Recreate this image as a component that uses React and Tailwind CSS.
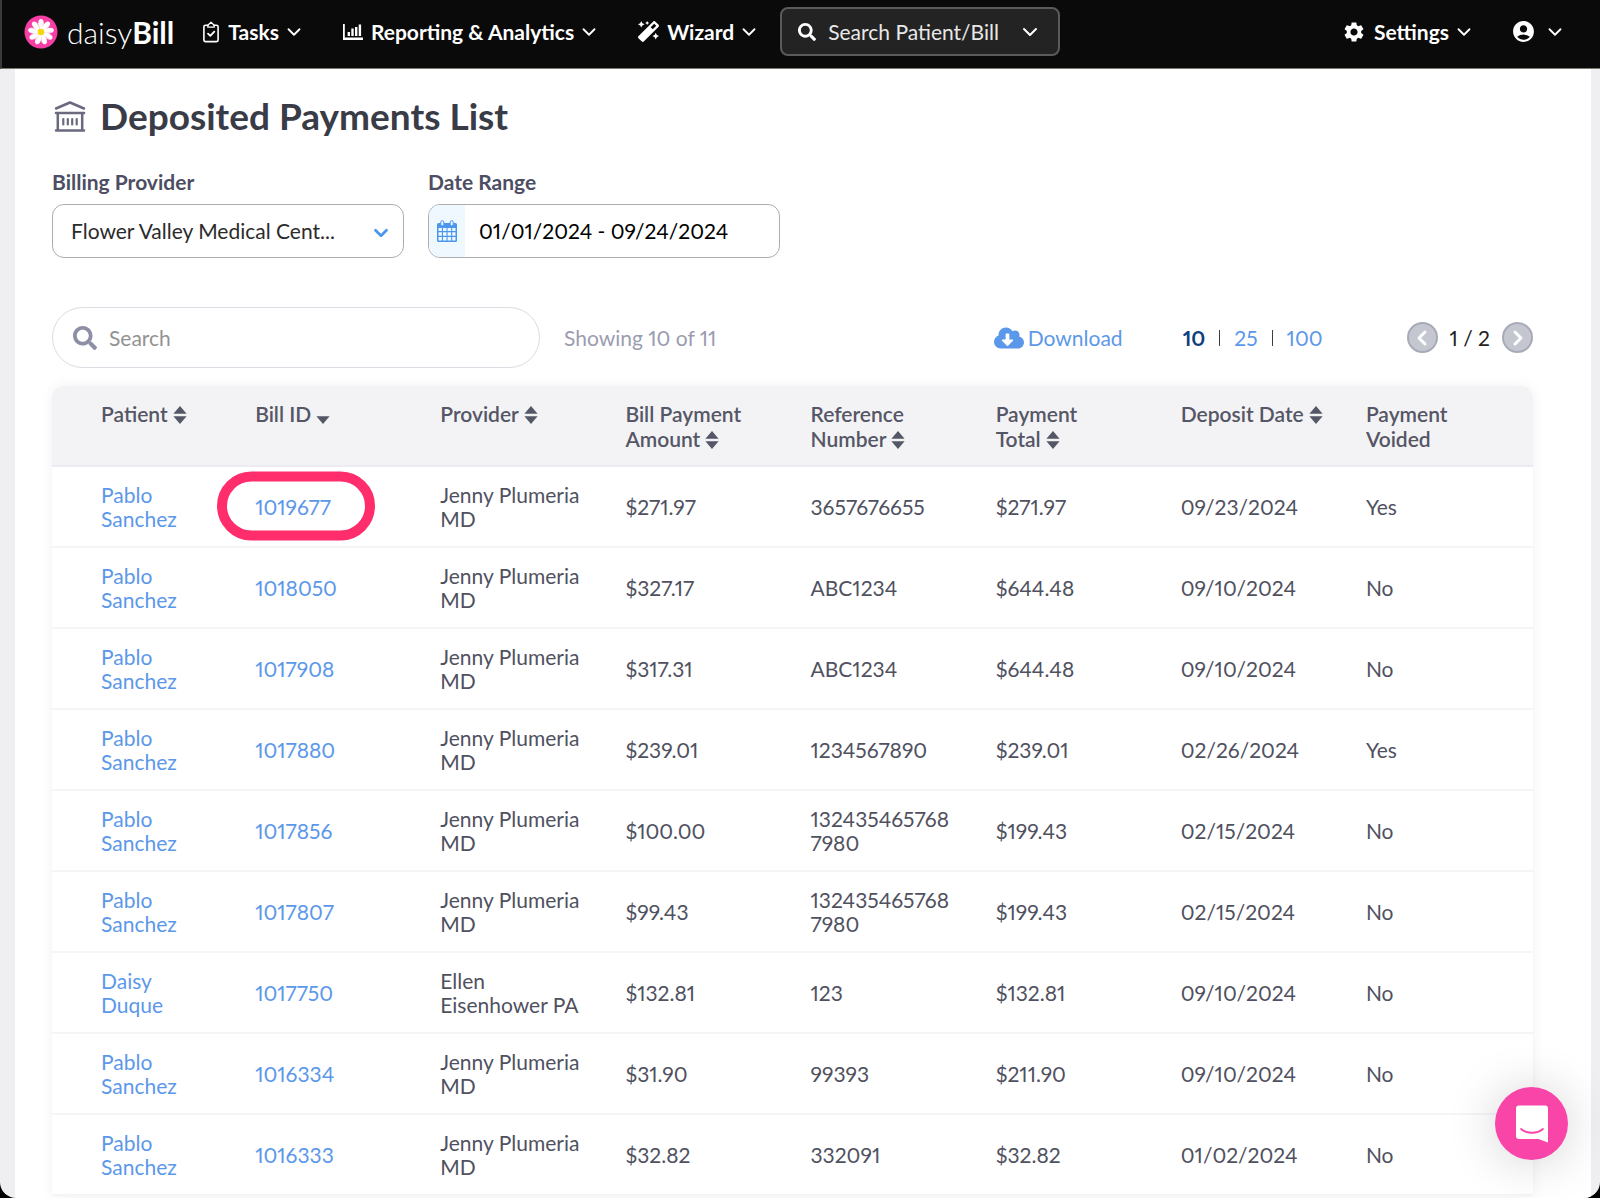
import React, { useState } from "react";
import { FaSearch, FaMagic, FaCloudDownloadAlt } from "react-icons/fa";
import { MdSettings, MdAccountCircle } from "react-icons/md";
import { ChevronDown, ChevronLeft, ChevronRight } from "lucide-react";

const payments = [
  { patient: "Pablo Sanchez", bill: "1019677", provider: "Jenny Plumeria MD", amount: "$271.97", reference: "3657676655", total: "$271.97", date: "09/23/2024", voided: "Yes" },
  { patient: "Pablo Sanchez", bill: "1018050", provider: "Jenny Plumeria MD", amount: "$327.17", reference: "ABC1234", total: "$644.48", date: "09/10/2024", voided: "No" },
  { patient: "Pablo Sanchez", bill: "1017908", provider: "Jenny Plumeria MD", amount: "$317.31", reference: "ABC1234", total: "$644.48", date: "09/10/2024", voided: "No" },
  { patient: "Pablo Sanchez", bill: "1017880", provider: "Jenny Plumeria MD", amount: "$239.01", reference: "1234567890", total: "$239.01", date: "02/26/2024", voided: "Yes" },
  { patient: "Pablo Sanchez", bill: "1017856", provider: "Jenny Plumeria MD", amount: "$100.00", reference: "1324354657687980", total: "$199.43", date: "02/15/2024", voided: "No" },
  { patient: "Pablo Sanchez", bill: "1017807", provider: "Jenny Plumeria MD", amount: "$99.43", reference: "1324354657687980", total: "$199.43", date: "02/15/2024", voided: "No" },
  { patient: "Daisy Duque", bill: "1017750", provider: "Ellen Eisenhower PA", amount: "$132.81", reference: "123", total: "$132.81", date: "09/10/2024", voided: "No" },
  { patient: "Pablo Sanchez", bill: "1016334", provider: "Jenny Plumeria MD", amount: "$31.90", reference: "99393", total: "$211.90", date: "09/10/2024", voided: "No" },
  { patient: "Pablo Sanchez", bill: "1016333", provider: "Jenny Plumeria MD", amount: "$32.82", reference: "332091", total: "$32.82", date: "01/02/2024", voided: "No" },
];

// the last word stays on the same line as its sort icon
const columns = [
  { first: "", last: "Patient", sort: "both" },
  { first: "Bill", last: "ID", sort: "desc" },
  { first: "", last: "Provider", sort: "both" },
  { first: "Bill Payment", last: "Amount", sort: "both" },
  { first: "Reference", last: "Number", sort: "both" },
  { first: "Payment", last: "Total", sort: "both" },
  { first: "Deposit", last: "Date", sort: "both" },
  { first: "Payment", last: "Voided", sort: null },
];

const petals = [0, 40, 80, 120, 160, 200, 240, 280, 320];

function DaisyLogo() {
  return (
    <svg viewBox="0 0 34 34" className="w-[34px] h-[34px]" aria-hidden="true">
      <circle cx="17" cy="17" r="16.5" fill="#f63ea5" />
      {petals.map((angle) => (
        <g key={angle} transform={`rotate(${angle} 17 17)`}>
          <path d="M17 17 C13.2 11 13.4 4 17 4 C20.6 4 20.8 11 17 17Z" fill="#fff" />
          <path d="M17 16 C18.4 12 19.4 8 18.8 5.6 C20.8 9 19.4 13 17 16Z" fill="#fbc3e2" />
        </g>
      ))}
      <circle cx="17" cy="17" r="3.3" fill="#f7d70c" />
    </svg>
  );
}

function ClipboardIcon() {
  return (
    <svg viewBox="0 0 18 22" className="w-[18px] h-[22px]" fill="none" stroke="currentColor" strokeWidth="1.6" strokeLinecap="round" strokeLinejoin="round" aria-hidden="true">
      <path d="M6 4.200H3.500A1.600 1.600 0 0 0 1.900 5.800v13.200a1.600 1.600 0 0 0 1.600 1.600h11a1.600 1.600 0 0 0 1.600-1.600V5.800A1.600 1.600 0 0 0 14.500 4.200H12" />
      <path d="M5.800 6.200V4.200L9 1.300l3.200 2.900v2z" strokeWidth="1.300" />
      <path d="M6 12.600l2.300 2.300 4-4.200" strokeWidth="1.800" />
    </svg>
  );
}

function ChartIcon() {
  return (
    <svg viewBox="0 0 20 18" className="w-5 h-[18px]" fill="currentColor" aria-hidden="true">
      <path d="M0 1h1.800v13.600H20V17H0z" />
      <path d="M4.600 9h2.400v4H4.600zM8.300 5.500h2.400V13H8.300zM12 4h2.400v9h-2.400zM15.700 1.500h2.400V13h-2.400z" />
    </svg>
  );
}

function BankIcon() {
  return (
    <svg viewBox="0 0 32 32" className="w-8 h-8 text-[#696980]" fill="none" stroke="currentColor" strokeWidth="2.500" strokeLinecap="round" strokeLinejoin="round" aria-hidden="true">
      <path d="M2 8.500L16 2.500l14 6M2 13h28M3.800 13v16M28.200 13v16M2 30.500h28" />
      <path d="M9.300 19v5.500M13.800 19v5.500M18.200 19v5.500M22.700 19v5.500" strokeWidth="2.200" />
    </svg>
  );
}

function CalendarIcon() {
  return (
    <svg viewBox="0 0 20 22" className="w-5 h-[22px]" aria-hidden="true">
      <rect x="0" y="3" width="20" height="19" rx="1.500" fill="#4b97ee" />
      <path d="M1.500 8h3.400v3H1.500zM6 8h3.500v3H6zM10.600 8h3.500v3h-3.500zM15.200 8h3.300v3h-3.300zM1.500 12.200h3.400v3.500H1.500zM6 12.200h3.500v3.500H6zM10.600 12.200h3.500v3.500h-3.500zM15.200 12.200h3.300v3.500h-3.300zM1.500 17h3.400v3.500H1.500zM6 17h3.500v3.500H6zM10.600 17h3.500v3.500h-3.500zM15.200 17h3.300v3.500h-3.300z" fill="#eff7ff" />
      <rect x="3.800" y="0.600" width="3" height="5.200" rx="1.500" fill="#eff7ff" stroke="#4b97ee" strokeWidth="1" />
      <rect x="13.200" y="0.600" width="3" height="5.200" rx="1.500" fill="#eff7ff" stroke="#4b97ee" strokeWidth="1" />
    </svg>
  );
}

function SortIcon({ type }) {
  return (
    <svg viewBox="0 0 14 18" className="inline-block w-[14px] h-[18px] ml-[5px] align-[-2px]" fill="currentColor" aria-hidden="true">
      {type === "both" && <path d="M7 0L13.600 7.700H0.400z" />}
      <path d="M0.400 10.200h13.200L7 17.900z" />
    </svg>
  );
}

function NavItem({ icon, label }) {
  return (
    <button type="button" className="flex items-center text-[21px] leading-6 font-bold text-white">
      {icon}
      <span className="ml-2">{label}</span>
      <ChevronDown className="w-[22px] h-[22px] ml-1" strokeWidth={2} />
    </button>
  );
}

function Navbar() {
  return (
    <header className="flex items-center shrink-0 h-[69px] pb-[5px] pl-[22px] pr-[34px] bg-[#0a0a0a] border-b border-b-[#77776f] border-l-2 border-l-[#3a3a3a]">
      <a href="#home" className="flex items-center gap-[9px] text-white">
        <DaisyLogo />
        <span className="text-[30px] leading-8 font-light">
          daisy<span className="font-bold">Bill</span>
        </span>
      </a>
      <nav className="flex items-center gap-[38px] ml-7">
        <NavItem icon={<ClipboardIcon />} label="Tasks" />
        <NavItem icon={<ChartIcon />} label="Reporting & Analytics" />
        <NavItem icon={<FaMagic className="w-[21px] h-[21px]" />} label="Wizard" />
      </nav>
      <button
        type="button"
        className="flex items-center w-[280px] h-[49px] ml-5 px-4 rounded-lg border-2 border-[#5a5a5a] bg-[#232323] text-[21px] text-[#e8e8e8]"
      >
        <FaSearch className="w-[18px] h-[18px] text-white" />
        <span className="ml-3 mr-auto">Search Patient/Bill</span>
        <ChevronDown className="w-6 h-6 text-white" strokeWidth={2} />
      </button>
      <div className="flex items-center gap-9 ml-auto">
        <NavItem icon={<MdSettings className="w-6 h-6" />} label="Settings" />
        <button type="button" aria-label="Account" className="flex items-center gap-2 text-white">
          <MdAccountCircle className="w-[25px] h-[25px]" />
          <ChevronDown className="w-[22px] h-[22px]" strokeWidth={2} />
        </button>
      </div>
    </header>
  );
}

function Filters() {
  return (
    <div className="flex gap-6 mt-[30px]">
      <div className="w-[352px]">
        <label htmlFor="provider" className="block text-[21px] leading-6 font-bold text-[#4d4e63]">
          Billing Provider
        </label>
        <div className="relative mt-[10px]">
          <select
            id="provider"
            className="w-full h-[54px] pl-[18px] pr-12 appearance-none rounded-xl border border-[#adadad] bg-white text-[21px] text-[#2b2b2b]"
          >
            <option>Flower Valley Medical Cent...</option>
          </select>
          <ChevronDown className="absolute right-3 top-[18px] w-[22px] h-[22px] text-[#4b97ee] pointer-events-none" strokeWidth={3} />
        </div>
      </div>
      <div className="w-[352px]">
        <label htmlFor="range" className="block text-[21px] leading-6 font-bold text-[#4d4e63]">
          Date Range
        </label>
        <div className="flex h-[54px] mt-[10px] rounded-xl border border-[#adadad] overflow-hidden">
          <span className="flex items-center justify-center w-9 bg-[#eff7ff]">
            <CalendarIcon />
          </span>
          <input
            id="range"
            type="text"
            defaultValue="01/01/2024 - 09/24/2024"
            className="flex-1 min-w-0 pl-[14px] text-[21px] text-black outline-none"
          />
        </div>
      </div>
    </div>
  );
}

function Toolbar({ pageSize, setPageSize }) {
  const sizes = [10, 25, 100];

  return (
    <div className="flex items-center mt-[49px] text-[21px] leading-6">
      <label className="flex items-center w-[488px] h-[61px] pl-5 rounded-full border border-[#dcdce4]">
        <FaSearch className="w-6 h-6 text-[#8d8fa6]" />
        <input
          type="text"
          aria-label="Search"
          placeholder="Search"
          className="flex-1 ml-3 mr-6 outline-none placeholder:text-[#929292]"
        />
      </label>
      <span className="ml-6 text-[#9b9cb0]">Showing 10 of 11</span>
      <a href="#download" className="flex items-center gap-1 ml-auto text-[#5c98ea]">
        <FaCloudDownloadAlt className="w-[30px] h-[30px]" />
        Download
      </a>
      <div className="flex items-center gap-[14px] ml-[60px] text-[#4d4e63]">
        {sizes.map((size, i) => (
          <React.Fragment key={size}>
            {i > 0 && <span className="w-px h-4 bg-[#3c3c46]"></span>}
            <button
              type="button"
              onClick={() => setPageSize(size)}
              className={size === pageSize ? "font-bold text-[#103f80]" : "text-[#5c98ea]"}
            >
              {size}
            </button>
          </React.Fragment>
        ))}
      </div>
      <div className="flex items-center gap-3 ml-[84px]">
        <button type="button" aria-label="Previous page" className="flex items-center justify-center w-[31px] h-[31px] rounded-full border-2 border-[#a9aab8] bg-[#c5c7d0] text-white">
          <ChevronLeft className="w-6 h-6 shrink-0" strokeWidth={3} />
        </button>
        <span className="text-[#222]">1 / 2</span>
        <button type="button" aria-label="Next page" className="flex items-center justify-center w-[31px] h-[31px] rounded-full border-2 border-[#a9aab8] bg-[#c5c7d0] text-white">
          <ChevronRight className="w-6 h-6 shrink-0" strokeWidth={3} />
        </button>
      </div>
    </div>
  );
}

function PaymentsTable() {
  return (
    <div className="mt-[18px] rounded-t-xl shadow-[0_0_12px_rgba(60,80,80,0.08)]">
      <table className="w-full table-fixed border-separate border-spacing-0 text-[21px] leading-6 text-[#50515f]">
        <thead>
          <tr>
            {columns.map((column) => (
              <th
                key={column.first + column.last}
                className="h-[81px] pt-[15px] px-[18px] first:pl-[49px] first:pr-6 first:rounded-tl-xl last:rounded-tr-xl bg-[#f3f3f5] border-b-2 border-[#ebebf1] text-left align-top leading-[25px] font-semibold text-[#555666]"
              >
                {column.first}{" "}
                <span className="whitespace-nowrap">
                  {column.last}
                  {column.sort && <SortIcon type={column.sort} />}
                </span>
              </th>
            ))}
          </tr>
        </thead>
        <tbody>
          {payments.map((payment, i) => (
            <tr key={payment.bill} className="h-[81px] *:px-[18px] *:border-b-2 *:border-[#f5f5f7]">
              <td className="first:pl-[49px] first:pr-6">
                <a href="#patient" className="text-[#5c98ea]">{payment.patient}</a>
              </td>
              <td>
                <span className="relative">
                  <a href="#bill" className="text-[#5c98ea]">{payment.bill}</a>
                  {i === 0 && (
                    <span className="absolute -left-[38px] top-1/2 -translate-y-1/2 w-[158px] h-[69px] rounded-full border-[10px] border-[#ff2d6c] pointer-events-none"></span>
                  )}
                </span>
              </td>
              <td>{payment.provider}</td>
              <td>{payment.amount}</td>
              <td className="break-all">{payment.reference}</td>
              <td>{payment.total}</td>
              <td>{payment.date}</td>
              <td>{payment.voided}</td>
            </tr>
          ))}
        </tbody>
      </table>
    </div>
  );
}

function ChatLauncher() {
  return (
    <button
      type="button"
      aria-label="Open chat"
      className="fixed right-8 bottom-[38px] flex items-center justify-center w-[73px] h-[73px] rounded-full bg-[#f944a8] shadow-[0_2px_50px_rgba(0,0,0,0.18)]"
    >
      <svg viewBox="0 0 34 38" className="w-[34px] h-[38px]" aria-hidden="true">
        <path d="M4 0.500h26a3 3 0 0 1 3 3V37.500L23.500 34H4a3 3 0 0 1-3-3V3.500a3 3 0 0 1 3-3z" fill="#fff" />
        <path d="M6 24c6 5 16 5 22 0" fill="none" stroke="#f944a8" strokeWidth="1.800" strokeLinecap="round" />
      </svg>
    </button>
  );
}

export default function App() {
  const [pageSize, setPageSize] = useState(10);

  return (
    <div className="h-screen bg-black font-[Lato,sans-serif] proportional-nums">
      <div className="flex flex-col h-full overflow-hidden rounded-b-2xl bg-[#efeff2]">
        <Navbar />
        <main className="flex-1 min-h-0 ml-[15px] mr-[9px] pl-[37px] pr-[58px] pt-[23px] overflow-hidden bg-white">
          <h1 className="flex items-center gap-[14px] pl-[2px] text-[37px] leading-[48px] font-bold text-[#393b47]">
            <BankIcon />
            Deposited Payments List
          </h1>
          <Filters />
          <Toolbar pageSize={pageSize} setPageSize={setPageSize} />
          <PaymentsTable />
        </main>
      </div>
      <ChatLauncher />
    </div>
  );
}
